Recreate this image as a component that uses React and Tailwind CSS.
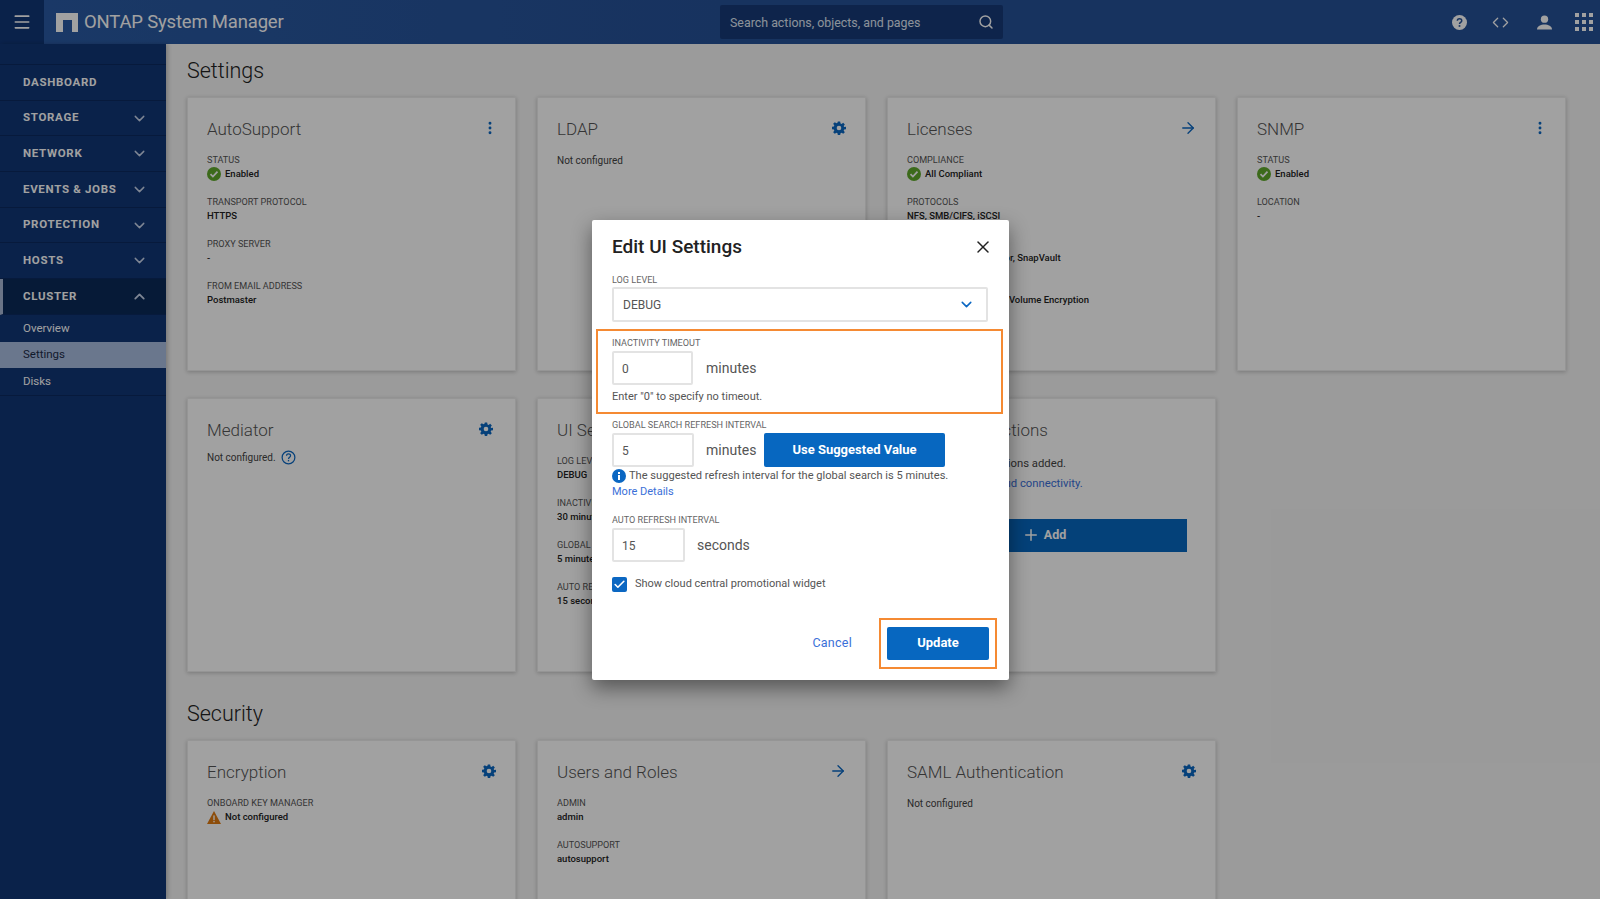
import React from "react";
import { ChevronDown, ChevronUp, Menu, Search, Code, ArrowRight, EllipsisVertical, X, Plus, Check } from "lucide-react";

const FONT = "font-['Roboto','Liberation_Sans',sans-serif]";

const NavRow = ({ label, open, active }) => (
  <div className={`h-[35.7px] flex items-center justify-between pl-[23px] pr-[18px] border-b border-[#0c2a60] ${active ? "bg-[#0a2a58] border-l-[3px] !pl-[20px] border-l-[#a9b8d4]" : ""}`}>
    <span className="text-[11.5px] font-bold tracking-[0.06em] text-white">{label}</span>
    {open === false && <ChevronDown size={17} strokeWidth={2} className="text-[#c8d4ea]" />}
    {open === true && <ChevronUp size={17} strokeWidth={2.5} className="text-[#c8d4ea]" />}
  </div>
);

const SubRow = ({ label, active }) => (
  <div className={`h-[26.7px] flex items-center pl-[23px] text-[11.5px] ${active ? "bg-[#a9bde0] text-[#1c2c48]" : "text-white"}`}>
    {label}
  </div>
);

const Gear = ({ className }) => (
  <svg viewBox="0 0 24 24" className={className} fill="currentColor">
    <path fillRule="evenodd" d="M10 1h4l.6 3.2 1.8.8L19.2 3l2.8 2.8-2 2.8.8 1.8L24 10v4l-3.2.6-.8 1.8 2 2.8-2.8 2.8-2.8-2-1.8.8L14 24h-4l-.6-3.2-1.8-.8-2.8 2L2 19.2l2-2.8-.8-1.8L0 14v-4l3.2-.6.8-1.8-2-2.8L4.8 2l2.8 2 1.8-.8zM12 8a4 4 0 1 0 0 8 4 4 0 0 0 0-8z" />
  </svg>
);

const OkIcon = () => (
  <svg viewBox="0 0 14 14" className="w-[14px] h-[14px] shrink-0">
    <circle cx="7" cy="7" r="7" fill="#60a92c" />
    <path d="M3.5 7.2l2.4 2.4 4.6-5" stroke="#fff" strokeWidth="1.7" fill="none" />
  </svg>
);

const WarnIcon = () => (
  <svg viewBox="0 0 14 13" className="w-[14px] h-[13px] shrink-0">
    <path d="M7 0l7 13H0z" fill="#e07a10" />
    <rect x="6.3" y="4.4" width="1.4" height="4.6" fill="#fff" />
    <rect x="6.3" y="9.8" width="1.4" height="1.5" fill="#fff" />
  </svg>
);

const HelpIcon = ({ className }) => (
  <svg viewBox="0 0 16 16" className={className}>
    <circle cx="8" cy="8" r="6.8" fill="none" stroke="currentColor" strokeWidth="1.3" />
    <path d="M5.9 6.2c0-2.8 4.3-2.8 4.3-.1 0 1.7-2.2 1.7-2.2 3.6" fill="none" stroke="currentColor" strokeWidth="1.3" />
    <rect x="7.3" y="10.6" width="1.4" height="1.5" fill="currentColor" />
  </svg>
);

const Info = ({ label, children }) => (
  <div className="mb-[14px]">
    <div className="text-[9.1px] leading-[14px] uppercase text-[#555]">{label}</div>
    <div className="text-[9.5px] leading-[14px] font-medium text-[#222] flex items-center gap-[4px] whitespace-nowrap">{children}</div>
  </div>
);

const Card = ({ title, icon, children }) => (
  <div className="bg-white border border-[#ececec] shadow-[0_1px_4px_rgba(0,0,0,0.22)] pl-[19px] pr-[19px] pt-[20px] h-[274px] relative">
    <div className="flex items-center justify-between h-[24px] mb-[11px]">
      <h3 className="text-[17px] font-light text-[#555]">{title}</h3>
      <span className="text-[#0b67c2] -translate-y-[2px]">{icon}</span>
    </div>
    {children}
  </div>
);

const gear = <Gear className="w-[14px] h-[14px]" />;
const arrow = <ArrowRight size={18} strokeWidth={1.8} className="-mr-[1px]" />;
const kebab = <EllipsisVertical size={16} strokeWidth={2.4} className="-mr-[2px]" />;

const FieldLabel = ({ children }) => (
  <div className="text-[9.1px] leading-[13px] uppercase text-[#666]">{children}</div>
);

const TextBox = ({ value, width }) => (
  <div className={`h-[34px] ${width} border-2 border-[#e3e3e3] rounded-[2px] flex items-center pl-[8px] pt-[1px] text-[12px] text-[#555]`}>
    {value}
  </div>
);

export default function App() {
  return (
    <div className={`relative h-[899px] overflow-hidden ${FONT}`}>
      {/* top bar */}
      <header className="h-[44px] flex items-center bg-[#255197]">
        <div className="w-[44px] h-full bg-[#103676] flex items-center justify-center">
          <Menu size={20} strokeWidth={2} className="text-white" />
        </div>
        <div className="h-full w-[676px] flex items-center pl-[12px] bg-gradient-to-r from-[#2a5aa3] to-[#255197]">
          <svg viewBox="0 0 22 19" className="w-[22px] h-[19px]">
            <path fill="#fff" d="M0 0h22v19h-6V7H7v12H0z" />
          </svg>
          <span className="ml-[6px] pt-[2px] text-[18.5px] tracking-[-0.01em] text-white">ONTAP System Manager</span>
        </div>
        <div className="w-[283px] h-[34px] bg-[#173a78] rounded-[2px] flex items-center justify-between pl-[10px] pr-[9px]">
          <span className="text-[12.4px] pt-[2px] text-[#dfe6f2]">Search actions, objects, and pages</span>
          <Search size={16} strokeWidth={2.2} className="text-white" />
        </div>
        <div className="flex-1 flex items-center justify-end pr-[7px]">
          <svg viewBox="0 0 16 16" className="w-[15px] h-[15px] mr-[25px]">
            <circle cx="8" cy="8" r="8" fill="#fff" />
            <path d="M5.7 6.2c0-3 4.7-3 4.7-.1 0 1.8-2.4 1.8-2.4 3.6" fill="none" stroke="#255197" strokeWidth="1.6" />
            <rect x="7.1" y="10.8" width="1.8" height="1.8" fill="#255197" />
          </svg>
          <Code size={17} strokeWidth={1.8} className="text-white mr-[28px]" />
          <svg viewBox="0 0 16 16" className="w-[15px] h-[15px] mr-[23px]">
            <circle cx="8" cy="4.4" r="3.9" fill="#fff" />
            <path d="M0 15.5c0-7 16-7 16 0z" fill="#fff" />
          </svg>
          <div className="grid grid-cols-3 gap-[3px]">
            {Array.from({ length: 9 }).map((_, i) => (
              <span key={i} className="w-[4px] h-[4px] bg-white" />
            ))}
          </div>
        </div>
      </header>

      <div className="flex h-[855px]">
        {/* side nav */}
        <nav className="w-[166px] shrink-0 bg-[#103676] pt-[20px] shadow-[2px_0_4px_rgba(0,0,0,0.2)] z-10">
          <div className="border-t border-[#0c2a60]">
            <NavRow label="DASHBOARD" />
            <NavRow label="STORAGE" open={false} />
            <NavRow label="NETWORK" open={false} />
            <NavRow label="EVENTS & JOBS" open={false} />
            <NavRow label="PROTECTION" open={false} />
            <NavRow label="HOSTS" open={false} />
            <NavRow label="CLUSTER" open={true} active />
            <SubRow label="Overview" />
            <SubRow label="Settings" active />
            <SubRow label="Disks" />
            <div className="border-t border-[#0c2a60]" />
          </div>
        </nav>

        {/* page body */}
        <main className="flex-1 bg-[#f5f5f5] pl-[21px] pr-[34px] overflow-hidden">
          <h1 className="text-[21.5px] font-light text-[#222] leading-[53px]">Settings</h1>
          <div className="grid grid-cols-4 gap-x-[21px] gap-y-[27px]">
            <Card title="AutoSupport" icon={kebab}>
              <Info label="Status"><OkIcon />Enabled</Info>
              <Info label="Transport Protocol">HTTPS</Info>
              <Info label="Proxy Server">-</Info>
              <Info label="From Email Address">Postmaster</Info>
            </Card>
            <Card title="LDAP" icon={gear}>
              <div className="text-[10px] text-[#444]">Not configured</div>
            </Card>
            <Card title="Licenses" icon={arrow}>
              <Info label="Compliance"><OkIcon />All Compliant</Info>
              <Info label="Protocols">NFS, SMB/CIFS, iSCSI</Info>
              <Info label="Data Protection">SnapRestore, SnapMirror, SnapVault</Info>
              <Info label="Security">Storage VM Encryption, Volume Encryption</Info>
            </Card>
            <Card title="SNMP" icon={kebab}>
              <Info label="Status"><OkIcon />Enabled</Info>
              <Info label="Location">-</Info>
            </Card>
            <Card title="Mediator" icon={<Gear className="w-[14px] h-[14px] -translate-x-[3px]" />}>
              <div className="text-[10px] text-[#444] flex items-center gap-[5px] -mt-[4px]">
                Not configured.
                <HelpIcon className="w-[15px] h-[15px] text-[#0b67c2]" />
              </div>
            </Card>
            <Card title="UI Settings" icon={gear}>
              <Info label="Log Level">DEBUG</Info>
              <Info label="Inactivity Timeout">30 minutes</Info>
              <Info label="Global Search Refresh Interval">5 minutes</Info>
              <Info label="Auto Refresh Interval">15 seconds</Info>
            </Card>
            <Card title="Cloud Connections">
              <div className="text-[11.3px] text-[#444] mt-[13px]">No external connections added.</div>
              <div className="text-[11.3px] text-[#3a6fd8] mt-[3px]">Verify outbound cloud connectivity.</div>
              <button className="mt-[26px] w-[280px] h-[33px] bg-[#0767c0] text-white text-[12.5px] font-bold flex items-center justify-center gap-[4px] pr-[6px]">
                <Plus size={18} />
                Add
              </button>
            </Card>
            <div />
          </div>
          <h2 className="text-[21.5px] font-light text-[#222] leading-[28px] mt-[28px] mb-[12px]">Security</h2>
          <div className="grid grid-cols-4 gap-x-[21px]">
            <Card title="Encryption" icon={gear}>
              <Info label="Onboard Key Manager"><WarnIcon />Not configured</Info>
            </Card>
            <Card title="Users and Roles" icon={arrow}>
              <Info label="Admin">admin</Info>
              <Info label="AutoSupport">autosupport</Info>
            </Card>
            <Card title="SAML Authentication" icon={gear}>
              <div className="text-[10px] text-[#444]">Not configured</div>
            </Card>
          </div>
        </main>
      </div>

      {/* dim layer */}
      <div className="absolute inset-0 z-20 bg-black/[0.37]" />

      {/* Edit UI Settings dialog */}
      <div className="absolute z-30 left-[592px] top-[220px] w-[417px] h-[460px] bg-white rounded-[2px] shadow-[0_8px_20px_rgba(0,0,0,0.45)] px-[20px] pt-[15px]">
        <div className="flex items-center justify-between h-[24px] mb-[15px]">
          <h2 className="text-[19px] font-medium text-[#222]">Edit UI Settings</h2>
          <X size={20} strokeWidth={1.8} className="text-[#222] -mr-[4px]" />
        </div>

        <FieldLabel>Log Level</FieldLabel>
        <div className="h-[35px] w-[376px] border-2 border-[#e3e3e3] rounded-[2px] flex items-center justify-between pl-[9px] pr-[11px] text-[12px] text-[#555]">
          <span className="pt-[1px]">DEBUG</span>
          <ChevronDown size={17} strokeWidth={2.2} className="text-[#0b67c2]" />
        </div>

        <div className="-mx-[16px] mt-[7px] w-[407px] h-[85px] border-2 border-[#f58a33] px-[14px] pt-[6px]">
          <FieldLabel>Inactivity Timeout</FieldLabel>
          <div className="flex items-center gap-[13px] mt-[1px]">
            <TextBox value="0" width="w-[81px]" />
            <span className="text-[14px] text-[#555] pt-[1px]">minutes</span>
          </div>
          <div className="text-[11px] leading-[14px] text-[#555] mt-[5px]">Enter "0" to specify no timeout.</div>
        </div>

        <div className="mt-[5px]"><FieldLabel>Global Search Refresh Interval</FieldLabel></div>
        <div className="flex items-center mt-[1px]">
          <TextBox value="5" width="w-[82px]" />
          <span className="text-[14px] text-[#555] ml-[12px] w-[58px]">minutes</span>
          <button className="w-[181px] h-[34px] bg-[#0767c0] rounded-[2px] text-white text-[13px] font-bold">
            Use Suggested Value
          </button>
        </div>
        <div className="flex items-center gap-[3px] mt-[1px] h-[16px] text-[11.1px] text-[#555] whitespace-nowrap">
          <svg viewBox="0 0 14 14" className="w-[14px] h-[14px] shrink-0">
            <circle cx="7" cy="7" r="7" fill="#0b67c2" />
            <rect x="6" y="3" width="2" height="2" fill="#fff" />
            <rect x="6" y="6" width="2" height="5" fill="#fff" />
          </svg>
          The suggested refresh interval for the global search is 5 minutes.
        </div>
        <div className="text-[11px] leading-[16px] text-[#3a6fd8] mb-[14px]">More Details</div>

        <FieldLabel>Auto Refresh Interval</FieldLabel>
        <div className="flex items-center gap-[12px] mt-[1px]">
          <TextBox value="15" width="w-[73px]" />
          <span className="text-[14px] text-[#555]">seconds</span>
        </div>

        <div className="flex items-center gap-[8px] mt-[14px]">
          <span className="w-[15px] h-[15px] bg-[#0b67c2] rounded-[2px] flex items-center justify-center">
            <Check size={13} strokeWidth={3} className="text-white" />
          </span>
          <span className="text-[11px] text-[#555]">Show cloud central promotional widget</span>
        </div>

        <div className="flex items-center justify-end gap-[27px] mt-[25px] -mr-[8px]">
          <span className="text-[12.5px] pt-[1px] tracking-[0.02em] text-[#3a6fd8]">Cancel</span>
          <div className="border-2 border-[#f58a33] pl-[6px] pr-[6px] pt-[7px] pb-[7px]">
            <button className="block w-[102px] h-[33px] bg-[#0767c0] rounded-[2px] text-white text-[13px] font-bold">
              Update
            </button>
          </div>
        </div>
      </div>
    </div>
  );
}
